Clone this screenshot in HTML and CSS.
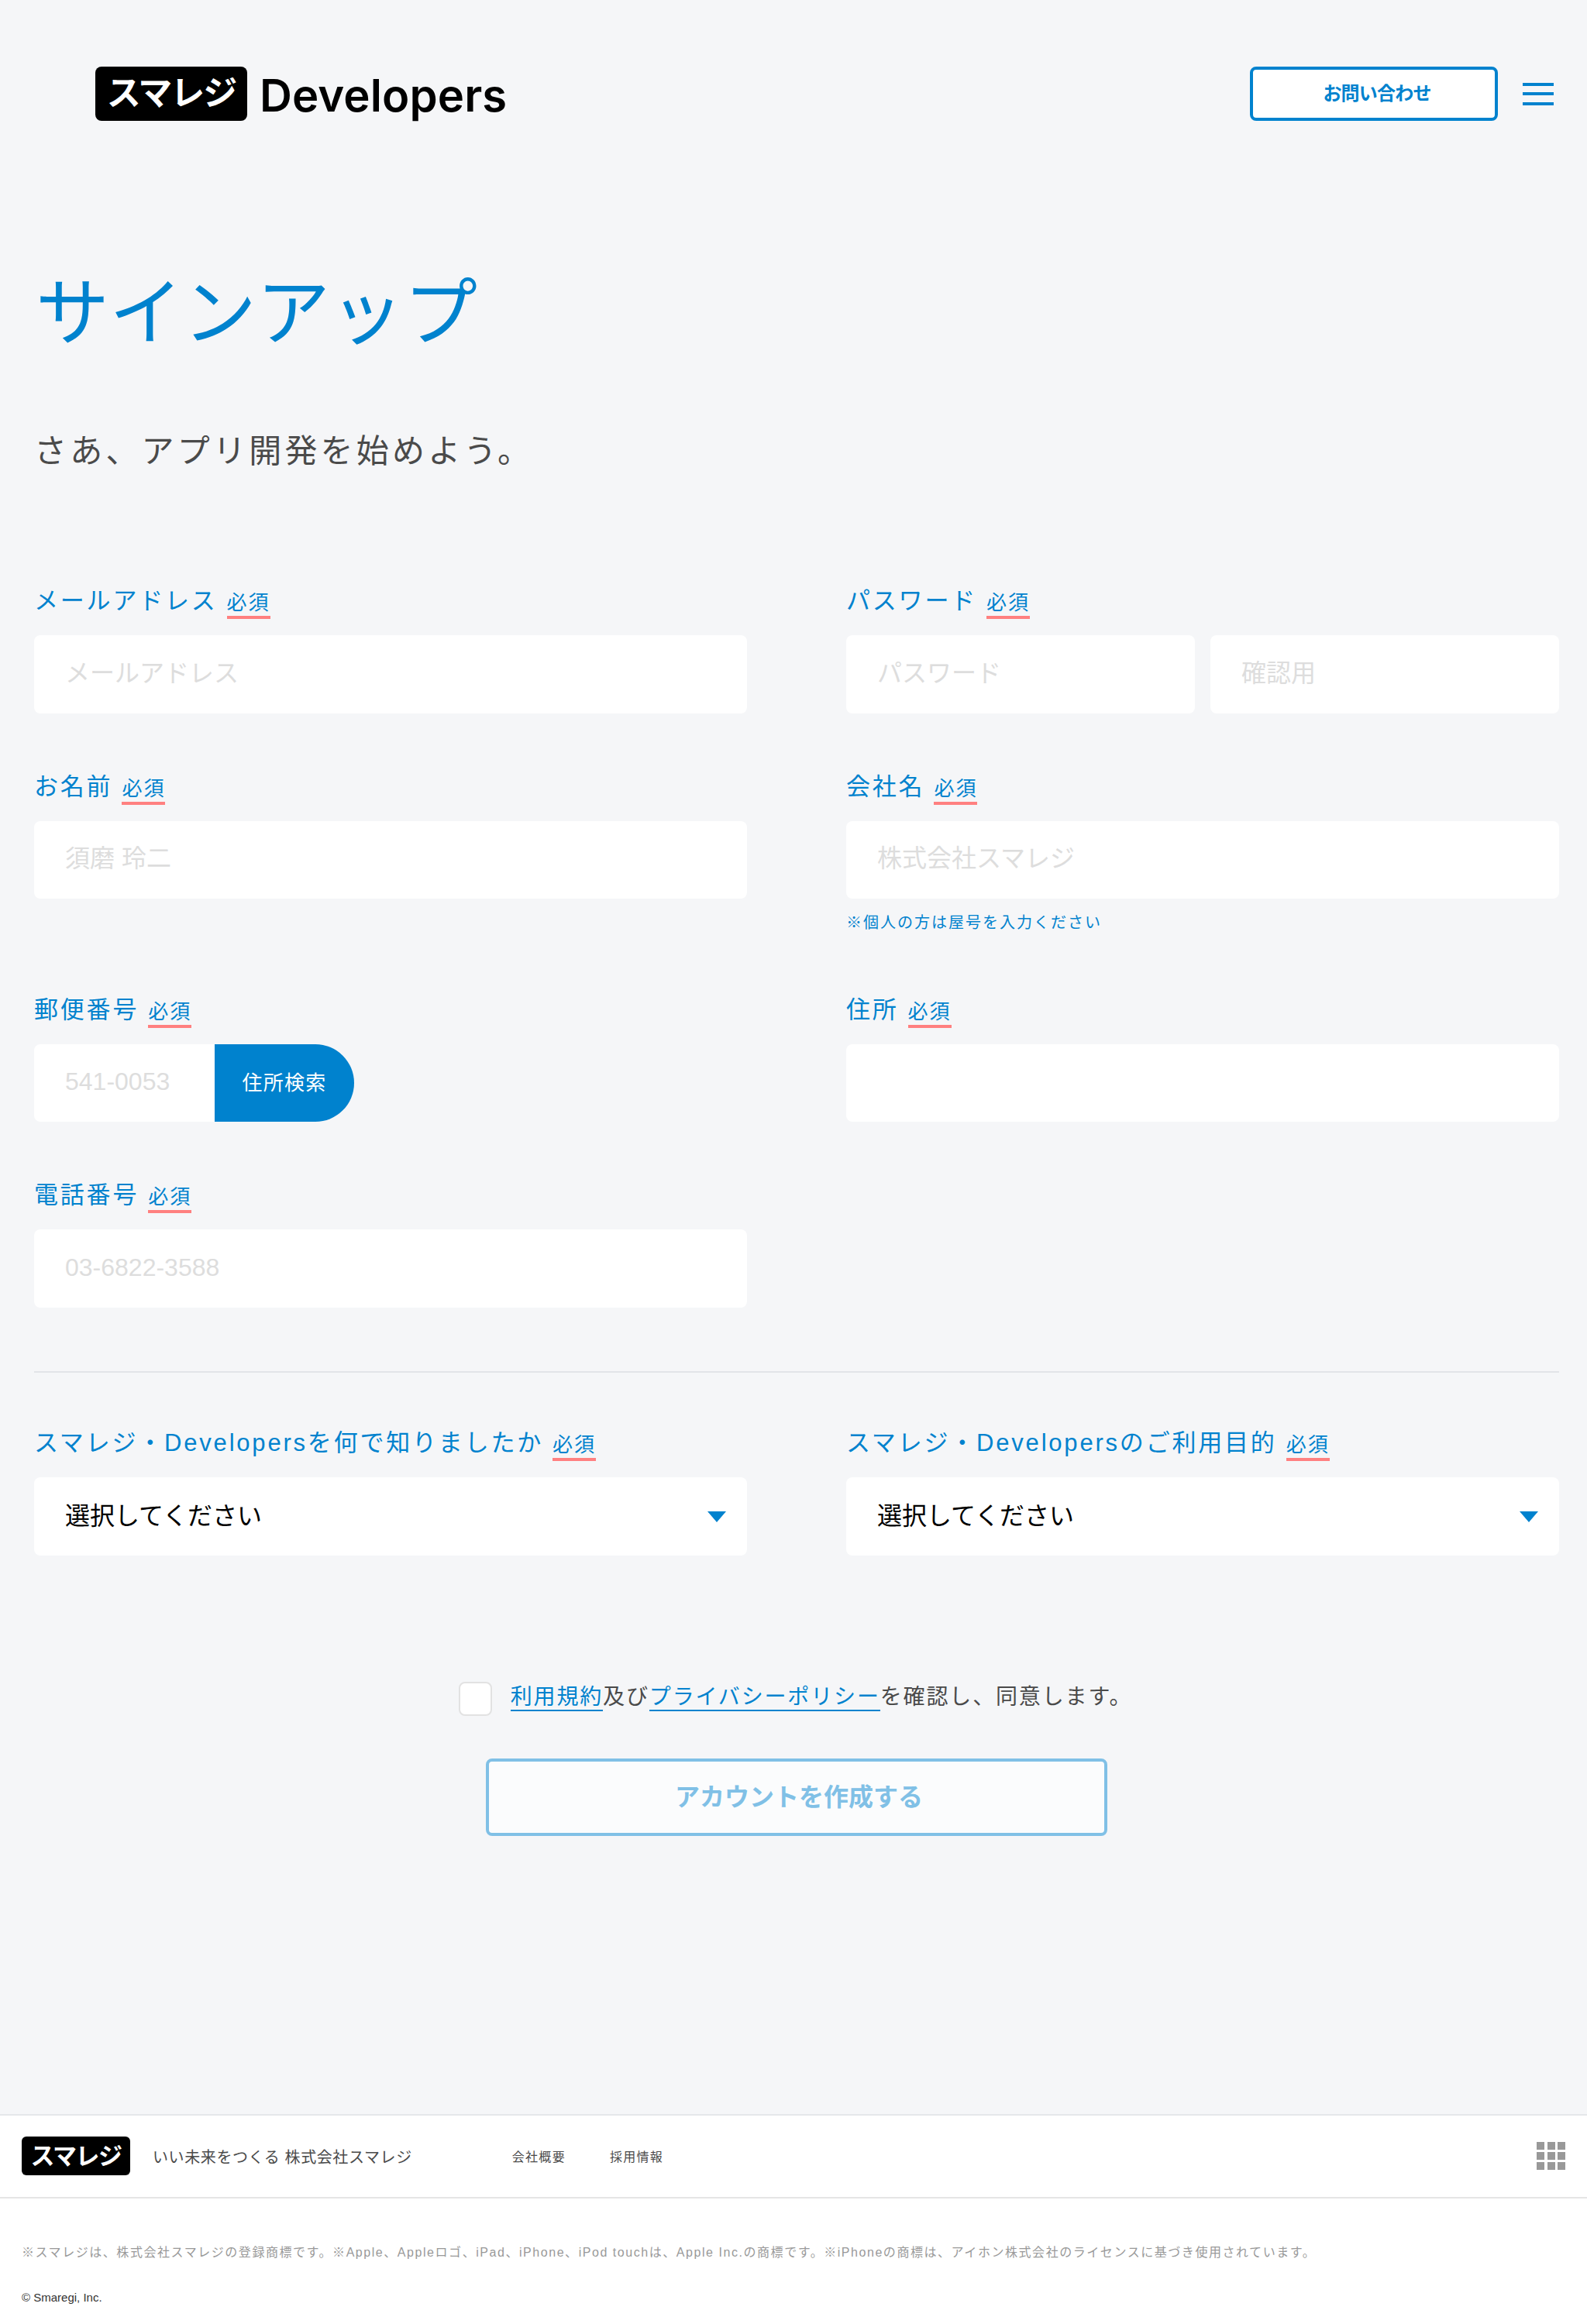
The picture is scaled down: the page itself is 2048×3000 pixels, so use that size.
FILE: index.html
```html
<!DOCTYPE html>
<html lang="ja">
<head>
<meta charset="utf-8">
<title>サインアップ | スマレジ Developers</title>
<link rel="stylesheet" href="styles.css">
</head>
<body>
<header class="site-header">
  <a class="brand" href="#">
    <span class="logo-box">スマレジ</span>
    <span class="brand-name">Developers</span>
  </a>
  <div class="header-actions">
    <a class="contact-btn" href="#">お問い合わせ</a>
    <button class="menu-btn" type="button" aria-label="メニュー"><span></span><span></span><span></span></button>
  </div>
</header>
<main class="content">
  <h1 class="page-title">サインアップ</h1>
  <p class="page-lead">さあ、アプリ開発を始めよう。</p>
  <form class="signup">
    <div class="form-grid">
      <div class="field">
        <label class="field-label">メールアドレス<span class="req">必須</span></label>
        <input class="text-input" type="text" placeholder="メールアドレス">
      </div>
      <div class="field">
        <label class="field-label">パスワード<span class="req">必須</span></label>
        <div class="pair">
          <input class="text-input" type="text" placeholder="パスワード">
          <input class="text-input" type="text" placeholder="確認用">
        </div>
      </div>
      <div class="field">
        <label class="field-label">お名前<span class="req">必須</span></label>
        <input class="text-input" type="text" placeholder="須磨 玲二">
      </div>
      <div class="field">
        <label class="field-label">会社名<span class="req">必須</span></label>
        <input class="text-input" type="text" placeholder="株式会社スマレジ">
        <p class="field-note">※個人の方は屋号を入力ください</p>
      </div>
      <div class="field">
        <label class="field-label">郵便番号<span class="req">必須</span></label>
        <div class="zip">
          <input class="text-input zip-input" type="text" placeholder="541-0053">
          <button class="zip-btn" type="button">住所検索</button>
        </div>
      </div>
      <div class="field">
        <label class="field-label">住所<span class="req">必須</span></label>
        <input class="text-input" type="text">
      </div>
      <div class="field">
        <label class="field-label">電話番号<span class="req">必須</span></label>
        <input class="text-input" type="text" placeholder="03-6822-3588">
      </div>
    </div>
    <hr class="divider">
    <div class="form-grid">
      <div class="field">
        <label class="field-label">スマレジ・Developersを何で知りましたか<span class="req">必須</span></label>
        <div class="select-wrap"><select class="select-input"><option>選択してください</option></select></div>
      </div>
      <div class="field">
        <label class="field-label">スマレジ・Developersのご利用目的<span class="req">必須</span></label>
        <div class="select-wrap"><select class="select-input"><option>選択してください</option></select></div>
      </div>
    </div>
    <div class="agree">
      <input class="check" type="checkbox">
      <span class="agree-text"><a href="#">利用規約</a>及び<a href="#">プライバシーポリシー</a>を確認し、同意します。</span>
    </div>
    <div class="submit-row">
      <button class="submit-btn" type="button" disabled>アカウントを作成する</button>
    </div>
  </form>
</main>
<footer class="site-footer">
  <div class="footer-top">
    <span class="logo-box logo-box-small">スマレジ</span>
    <span class="tagline">いい未来をつくる 株式会社スマレジ</span>
    <nav class="footer-nav"><a href="#">会社概要</a><a href="#">採用情報</a></nav>
    <div class="grid-icon"><i></i><i></i><i></i><i></i><i></i><i></i><i></i><i></i><i></i></div>
  </div>
  <div class="footer-bottom">
    <p class="legal">※スマレジは、株式会社スマレジの登録商標です。※Apple、Appleロゴ、iPad、iPhone、iPod touchは、Apple Inc.の商標です。※iPhoneの商標は、アイホン株式会社のライセンスに基づき使用されています。</p>
    <p class="copyright">© Smaregi, Inc.</p>
  </div>
</footer>
</body>
</html>
```
FILE: styles.css
```css
* { box-sizing: border-box; }
html, body { margin: 0; padding: 0; }
body {
  min-height: 3000px;
  background: #f5f6f8;
  color: #4a4a4a;
  font-family: "Liberation Sans", "Noto Sans CJK JP", sans-serif;
  display: flex;
  flex-direction: column;
}
a { color: inherit; text-decoration: none; }

/* header */
.site-header {
  height: 156px;
  padding: 86px 43px 0 123px;
  display: flex;
  justify-content: space-between;
  align-items: flex-start;
}
.brand { display: flex; align-items: center; gap: 16px; height: 70px; }
.logo-box {
  width: 196px;
  height: 70px;
  flex: none;
  display: flex;
  align-items: center;
  justify-content: center;
  background: #000;
  color: #fff;
  border-radius: 8px;
  font-size: 44px;
  font-weight: 700;
  letter-spacing: -2px;
  line-height: 1;
}
.brand-name {
  padding-top: 4px;
  font-family: Inter, "Liberation Sans", sans-serif;
  font-size: 58px;
  font-weight: 600;
  color: #000;
  letter-spacing: 0.1px;
  line-height: 70px;
}
.header-actions { display: flex; align-items: center; gap: 32px; }
.contact-btn {
  width: 320px;
  height: 70px;
  display: flex;
  align-items: center;
  justify-content: center;
  padding: 0 0 6px 8px;
  background: #fff;
  border: 4px solid #0082ce;
  border-radius: 8px;
  color: #0082ce;
  font-size: 24px;
  font-weight: 700;
  letter-spacing: -0.8px;
}
.menu-btn {
  width: 40px;
  height: 29px;
  padding: 0;
  border: 0;
  background: none;
  display: flex;
  flex-direction: column;
  justify-content: space-between;
}
.menu-btn span { display: block; height: 4px; background: #0082ce; }

/* heading */
.content { padding: 0 36px 0 44px; }
.page-title {
  margin: 201px 0 0 2px;
  font-size: 95px;
  line-height: 96px;
  font-weight: 400;
  color: #0082ce;
}
.page-lead {
  margin: 100px 0 0;
  font-size: 42px;
  line-height: 60px;
  letter-spacing: 4.2px;
  color: #4a4a4a;
}

/* form */
.signup { margin-top: 139px; }
.form-grid {
  display: grid;
  grid-template-columns: 920px 920px;
  column-gap: 128px;
  row-gap: 72px;
  padding-top: 1px;
}
.field-label {
  height: 46px;
  margin-bottom: 21px;
  display: flex;
  align-items: flex-end;
  font-size: 31px;
  line-height: 46px;
  letter-spacing: 2.8px;
  color: #0082ce;
  white-space: nowrap;
}
.req {
  margin-left: 12px;
  height: 38px;
  line-height: 34px;
  font-size: 26px;
  letter-spacing: 2px;
  border-bottom: 4px solid #ff8080;
}
.text-input, .select-input {
  display: block;
  width: 100%;
  height: 100.5px;
  padding: 0 40px;
  border: 0;
  border-radius: 8px;
  background: #fff;
  font-family: inherit;
  font-size: 32px;
  outline: none;
}
.text-input { padding-bottom: 2px; }
.text-input::placeholder { color: #ddd; opacity: 1; }
.pair { display: flex; gap: 20px; }
.pair .text-input { flex: 1; min-width: 0; }
.field-note {
  margin: 19px 0 0;
  height: 29.5px;
  font-size: 20px;
  line-height: 24px;
  letter-spacing: 2px;
  color: #0082ce;
}
.zip { display: flex; width: 413px; }
.zip-input { width: 233px; border-radius: 8px 0 0 8px; }
.zip-btn {
  width: 180px;
  height: 100.5px;
  padding: 0 0 5px;
  border: 0;
  border-radius: 0 50px 50px 0;
  background: #0082ce;
  color: #fff;
  font-family: inherit;
  font-size: 26px;
  letter-spacing: 1.3px;
}
.divider {
  height: 2px;
  margin: 82.5px 0 67px;
  border: 0;
  background: #e2e4e8;
}
.select-wrap { position: relative; }
.select-wrap::after {
  content: "";
  position: absolute;
  right: 27px;
  top: 44px;
  border-style: solid;
  border-width: 14px 12px 0;
  border-color: #0082ce transparent transparent;
}
.select-input { appearance: none; color: #000; }
.agree {
  margin-top: 163px;
  display: flex;
  justify-content: center;
  align-items: center;
  gap: 24px;
  padding-right: 3px;
}
.check {
  appearance: none;
  width: 43px;
  height: 44px;
  margin: 0;
  background: #fff;
  border: 2px solid #e2e2e2;
  border-radius: 8px;
}
.agree-text { font-size: 28px; letter-spacing: 1.85px; line-height: 40px; padding-bottom: 4px; color: #4a4a4a; }
.agree-text a { color: #0082ce; border-bottom: 2px solid #0082ce; padding-bottom: 1px; }
.submit-row { margin-top: 55px; display: flex; justify-content: center; }
.submit-btn {
  width: 802px;
  height: 100px;
  padding: 0 0 6px 6px;
  background: #fbfcfd;
  border: 4px solid #80c0e6;
  border-radius: 8px;
  color: #80c0e6;
  font-family: inherit;
  font-size: 32px;
  font-weight: 700;
}

/* footer */
.site-footer {
  margin-top: auto;
  background: #fff;
  border-top: 2px solid #e5e7ea;
}
.footer-top {
  height: 107px;
  padding: 27px 28px 0;
  display: flex;
  align-items: flex-start;
  border-bottom: 2px solid #e5e5e5;
}
.logo-box-small {
  width: 140px;
  height: 50px;
  border-radius: 6px;
  font-size: 31px;
  letter-spacing: -1.5px;
}
.tagline { margin-left: 29px; line-height: 54px; font-size: 20px; letter-spacing: 0.6px; color: #4a4a4a; }
.footer-nav {
  margin-left: 129px;
  display: flex;
  gap: 57px;
  line-height: 54px;
  font-size: 16px;
  letter-spacing: 1.3px;
  color: #4a4a4a;
}
.grid-icon {
  margin: 7px 0 0 auto;
  display: grid;
  grid-template-columns: repeat(3, 10px);
  grid-auto-rows: 10px;
  gap: 3px 3.5px;
}
.grid-icon i { display: block; background: #999; }
.footer-bottom { height: 162px; padding: 59px 28px 0; }
.legal {
  margin: 0;
  font-size: 16px;
  line-height: 22px;
  letter-spacing: 1.55px;
  color: #999;
  white-space: nowrap;
}
.copyright {
  margin: 37px 0 0;
  font-size: 15px;
  line-height: 20px;
  color: #333;
}
```
